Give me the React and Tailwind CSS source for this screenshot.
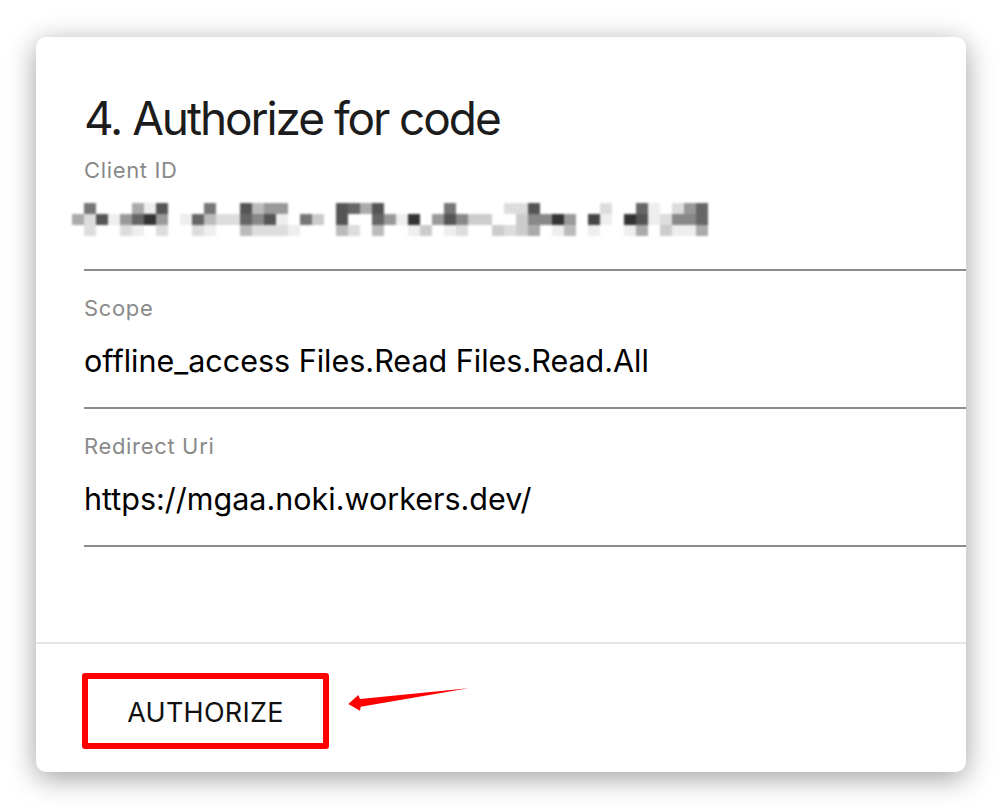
import React from 'react';

// pixelated client id, one hex digit per block = grey level (#fff .. #333)
const mosaic = [
  'f7fffae5fff7ff5b99ffff56a5fffff7ffffdd5fffffdff6efd96',
  'ad5e9639fe6bdd685ef7cf5ff69e3f958ccffc8839f4ef35ed886',
  'fdffdefdffdeffbdddefffbdfbffecfedffcdcafebfeffeafceea',
];

const Mosaic = () => (
  <svg width="636" height="33" viewBox="0 0 636 33" className="block -ml-3 blur-[0.9px]">
    {mosaic.map((row, r) =>
      row.split('').map((d, c) =>
        d === 'f' ? null : (
          <rect key={r + '-' + c} x={c * 12} y={r * 11} width="12" height="11" fill={'#' + d + d + d} />
        )
      )
    )}
  </svg>
);

const Field = ({ label, first, children }) => (
  <div className={`${first ? 'pt-[17px]' : 'pt-[27px]'} pb-[31px] border-b-2 border-[#8c8c8c]`}>
    <div className="text-[22px] leading-[21px] tracking-[0.03em] text-[#8a8a8a] h-[21px]">{label}</div>
    {children}
  </div>
);

const Value = ({ children }) => (
  <div className="mt-[27px] h-[30px] text-[30.5px] leading-[30px] text-black whitespace-nowrap">{children}</div>
);

const Arrow = () => (
  <svg width="124" height="27" viewBox="0 0 124 27" className="block mt-[13px] ml-[18px]">
    <polygon points="1.3,18 11.3,9 13,13 121.5,2.3 13.7,20.7 13,24.7" fill="#ff0000" />
  </svg>
);

export default function App() {
  return (
    <div className="w-[1002px] h-[808px] bg-white px-[36px] pt-[37px] font-['Inter',sans-serif]">
      <div className="w-[930px] h-[735px] rounded-[10px] bg-white shadow-[0_6px_28px_rgba(0,0,0,0.38)] overflow-hidden flex flex-col">
        <div className="pl-[48px] pt-[56px]">
          <h1 className="text-[46px] leading-[50px] tracking-[-0.045em] text-[#1c1c1c]">4. Authorize for code</h1>
          <Field label="Client ID" first>
            <div className="mt-[22px] mb-[2px]">
              <Mosaic />
            </div>
          </Field>
          <Field label="Scope">
            <Value>offline_access Files.Read Files.Read.All</Value>
          </Field>
          <Field label="Redirect Uri">
            <Value>https://mgaa.noki.workers.dev/</Value>
          </Field>
        </div>
        <div className="mt-[95px] border-t-2 border-[#e6e6e6] pt-[29px] pl-[46px] flex items-start">
          <button className="w-[247px] h-[76px] border-[6px] border-[#ff0000] rounded-[3px] bg-white flex items-center justify-center pt-[3px] text-[27px] leading-none text-[#111] tracking-[0.01em]">
            AUTHORIZE
          </button>
          <Arrow />
        </div>
      </div>
    </div>
  );
}
